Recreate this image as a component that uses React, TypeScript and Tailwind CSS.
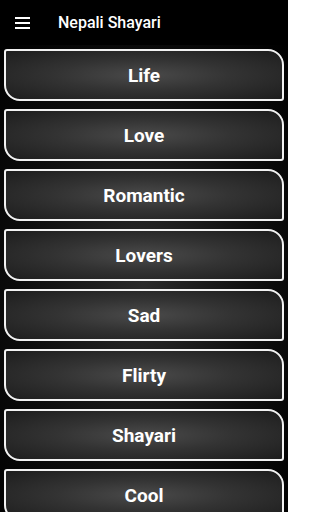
import { Menu } from "lucide-react";

const categories = ["Life", "Love", "Romantic", "Lovers", "Sad", "Flirty", "Shayari", "Cool"];

function CategoryButton({ label }: { label: string }) {
    return (
        <button className="h-[52px] w-full shrink-0 flex items-center justify-center border-2 border-[#f2f2f2] rounded-tl-[3px] rounded-br-[3px] rounded-tr-[16px] rounded-bl-[16px] bg-[radial-gradient(ellipse_at_center,#4a4a4a_0%,#333333_45%,#1d1d1d_100%)]">
            <span className="text-white text-[19px] font-bold leading-none">{label}</span>
        </button>
    );
}

export default function App() {
    return (
        <div className="w-[288px] h-[512px] overflow-hidden bg-black flex flex-col font-['Roboto',sans-serif]">
            <header className="h-[45px] shrink-0 flex items-center bg-black">
                <div className="w-[15px] ml-[15px] flex flex-col gap-[3px]">
                    <div className="h-[2px] bg-white" />
                    <div className="h-[2px] bg-white" />
                    <div className="h-[2px] bg-white" />
                </div>
                <h1 className="ml-[28px] text-white text-[16px] font-medium">Nepali Shayari</h1>
            </header>
            <main className="flex-1 flex flex-col gap-[8px] px-[4px] pt-[4px] bg-[radial-gradient(ellipse_at_50%_50%,#2a2a2a_0%,#0d0d0d_60%,#000_100%)]">
                {categories.map((c) => (
                    <CategoryButton key={c} label={c} />
                ))}
            </main>
        </div>
    );
}
